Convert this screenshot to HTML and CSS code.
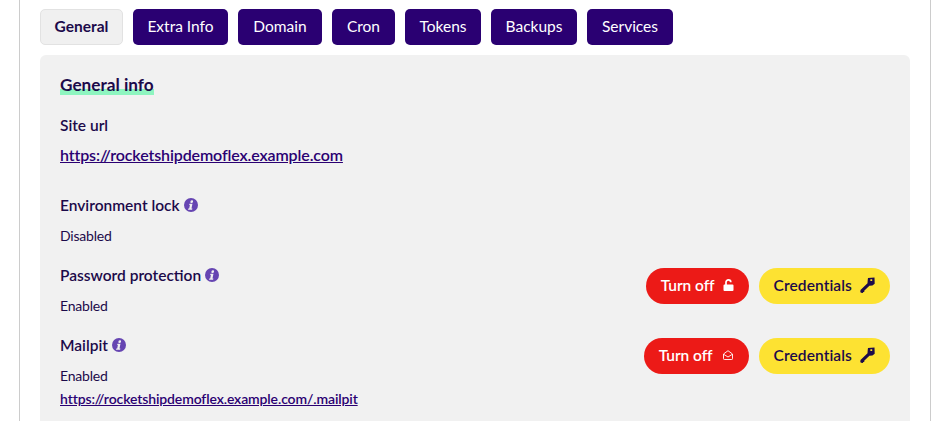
FILE: index.html
```html
<!DOCTYPE html>
<html lang="en">
<head>
<meta charset="utf-8">
<title>General</title>
<link rel="stylesheet" href="styles.css">
</head>
<body>
<svg class="defs" width="0" height="0" aria-hidden="true">
  <symbol id="info" viewBox="0 0 14 14">
    <circle cx="7" cy="7" r="7" fill="#6645b2"/>
    <g fill="#f0f0f0" transform="skewX(-12) translate(1.5 0)">
      <circle cx="7" cy="3.7" r="1.35"/>
      <path d="M5.2 5.8h3v4.6h.9v1.3H5v-1.3h.9V7.1h-.7z"/>
    </g>
  </symbol>
  <symbol id="key" viewBox="0 0 15 16">
    <path fill="currentColor" fill-rule="evenodd" d="M8 1 14.500.5l.2 6.300-2.300 1.700-3 .2L4.200 13.700l.1 1.200H3.200L3 16 1 15.700.3 15l.2-2L7.500 6.300l.2-3zM10.400 2.300v1.800h1.800V2.300z"/>
  </symbol>
</svg>
<main class="page">
  <nav class="tabs">
    <a class="tab tab-active w-general">General</a>
    <a class="tab w-extra">Extra Info</a>
    <a class="tab w-domain">Domain</a>
    <a class="tab w-cron">Cron</a>
    <a class="tab w-tokens">Tokens</a>
    <a class="tab w-backups">Backups</a>
    <a class="tab w-services">Services</a>
  </nav>
  <section class="panel">
    <h2 class="title"><span class="mark">General info</span></h2>
    <div class="block block-url">
      <div class="label">Site url</div>
      <a class="link" href="#">https://rocketshipdemoflex.example.com</a>
    </div>
    <div class="row">
      <div>
        <div class="label">Environment lock<svg class="info"><use href="#info"/></svg></div>
        <div class="value">Disabled</div>
      </div>
    </div>
    <div class="row">
      <div>
        <div class="label">Password protection<svg class="info"><use href="#info"/></svg></div>
        <div class="value">Enabled</div>
      </div>
      <div class="actions">
        <button class="pill pill-red">Turn off
          <svg class="ico-lock" viewBox="0 0 11 12"><path fill="currentColor" d="M1.500 5.500h8a1 1 0 0 1 1 1V11a1 1 0 0 1-1 1h-8a1 1 0 0 1-1-1V6.500a1 1 0 0 1 1-1z"/><path fill="none" stroke="currentColor" stroke-width="1.700" d="M3 6V3.300a2.400 2.400 0 0 1 4.800 0"/></svg>
        </button>
        <button class="pill pill-yellow">Credentials <svg class="ico-key"><use href="#key"/></svg></button>
      </div>
    </div>
    <div class="row row-last">
      <div>
        <div class="label">Mailpit<svg class="info"><use href="#info"/></svg></div>
        <div class="value">Enabled</div>
        <a class="link link-small" href="#">https://rocketshipdemoflex.example.com/.mailpit</a>
      </div>
      <div class="actions">
        <button class="pill pill-red pill-mail">Turn off
          <svg class="ico-mail" viewBox="0 0 10 10"><path fill="none" stroke="currentColor" stroke-width=".9" stroke-linejoin="round" d="M.5 4 5 .7 9.500 4v4.700a.8.800 0 0 1-.8.800H1.300a.8.800 0 0 1-.8-.8zM1 4.500 5 7l4-2.500"/></svg>
        </button>
        <button class="pill pill-yellow">Credentials <svg class="ico-key"><use href="#key"/></svg></button>
      </div>
    </div>
  </section>
</main>
</body>
</html>
```
FILE: styles.css
```css
* { box-sizing: border-box; }
html, body { margin: 0; height: 421px; overflow: hidden; background: #fff; }
body { font-family: "Lato", "Open Sans", sans-serif; color: #1c0a4a; font-size: 16px; }
.defs { position: absolute; }
.page {
  width: 912px; height: 421px; margin-left: 19px;
  border-left: 1px solid #ccc; border-right: 1px solid #ccc;
  padding: 9px 20px 0;
}
.tabs { display: flex; gap: 10px; }
.tab {
  height: 36px; display: flex; align-items: center; justify-content: center;
  background: #2a0072; color: #fff; border-radius: 5px; font-size: 15.500px; padding-bottom: 2px;
}
.tab-active { background: #f0f0f0; border: 1px solid #e2e2e2; color: #1c0a4a; font-weight: 700; }
.w-general { width: 83px; }
.w-extra { width: 95px; }
.w-domain { width: 84px; }
.w-cron { width: 63px; }
.w-tokens { width: 76px; }
.w-backups { width: 86px; }
.w-services { width: 86px; }
.panel { margin-top: 10px; height: 366px; background: #f1f1f1; border-radius: 6px 6px 0 0; padding: 19px 20px 0; overflow: hidden; }
.title { margin: 0 0 19px; font-size: 17.200px; line-height: 22px; font-weight: 700; }
.mark { background: linear-gradient(#8ef5c0, #8ef5c0) 0 100% / 100% 6px no-repeat; display: inline-block; line-height: 21px; }
.block-url { margin-bottom: 30px; }
.label { font-size: 15.500px; line-height: 20px; font-weight: 600; display: flex; align-items: center; gap: 4px; white-space: pre; }
.value { margin-top: 11px; font-size: 14px; line-height: 20px; letter-spacing: -.2px; }
.link { display: block; margin-top: 10px; font-size: 16px; line-height: 20px; color: #2a0072; font-weight: 600; text-decoration: underline; letter-spacing: -.12px; }
.link-small { margin-top: 3px; font-size: 14px; letter-spacing: -.12px; }
.row { display: flex; justify-content: space-between; align-items: flex-start; height: 70px; }
.row-last { height: 74px; }
.info { width: 14px; height: 14px; }
.actions { display: flex; gap: 10px; margin-top: 3px; }
.pill {
  height: 36px; border: 0; border-radius: 18px; padding: 0 15px 2px;
  display: flex; align-items: center; gap: 8px;
  font: 600 15.500px "Lato", sans-serif; letter-spacing: .1px; color: #fff; white-space: nowrap;
}
.pill-mail { gap: 10px; padding-right: 16px; }
.pill-red { background: #ec1a17; letter-spacing: -.05px; }
.pill-yellow { background: #fde232; color: #1c0a4a; }
.ico-lock { width: 11px; height: 12px; }
.ico-mail { width: 10px; height: 10px; }
.ico-key { width: 15px; height: 16px; }
```
